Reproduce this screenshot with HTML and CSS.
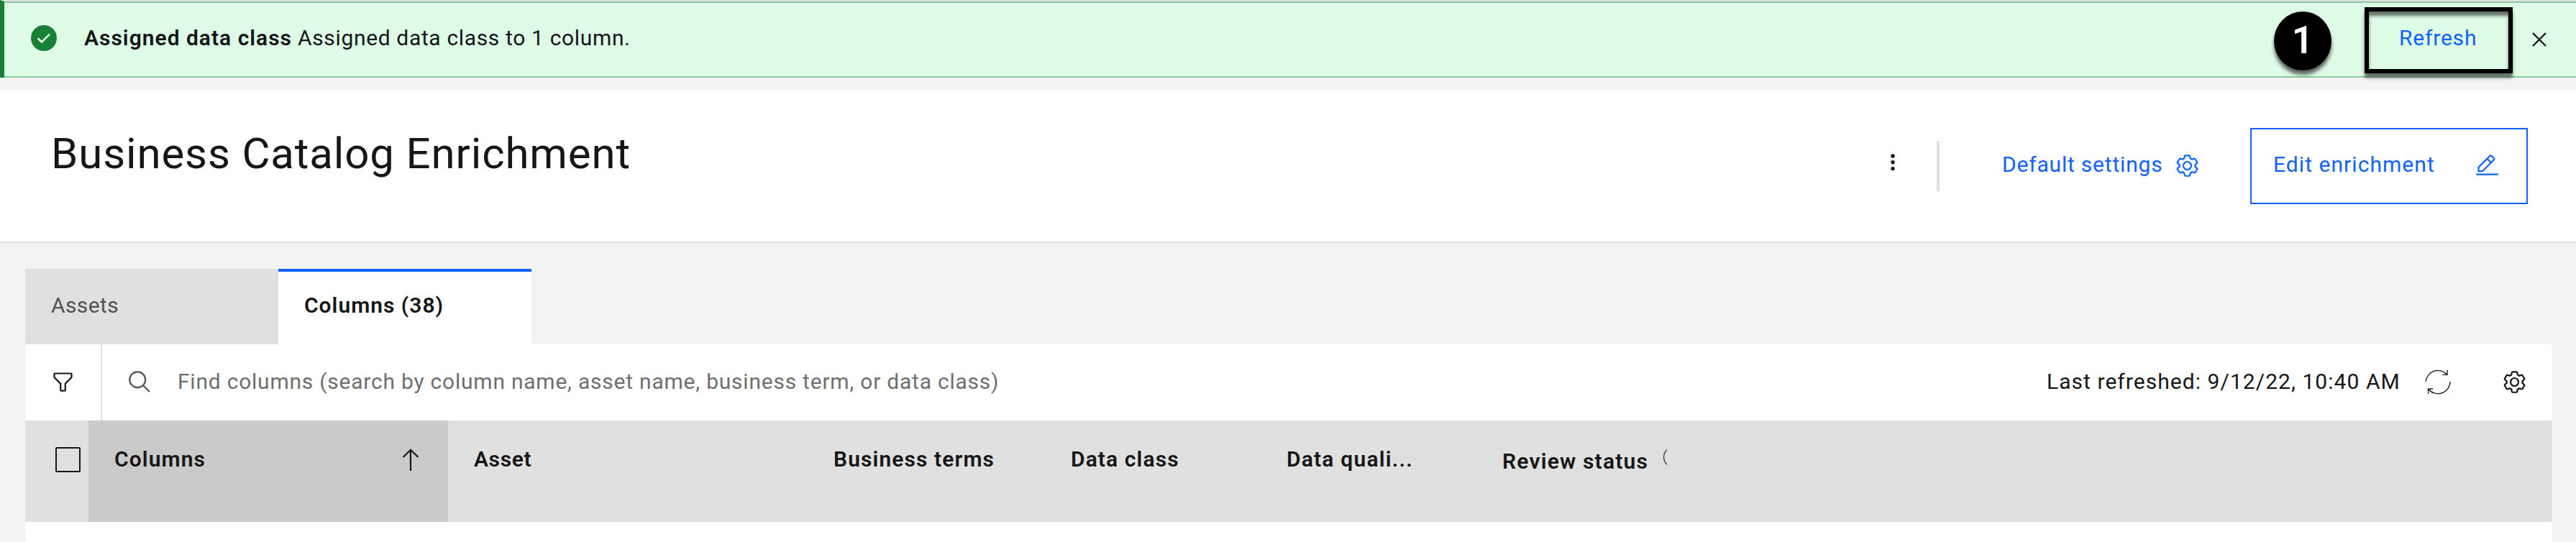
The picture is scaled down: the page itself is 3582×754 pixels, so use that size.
FILE: index.html
```html
<!DOCTYPE html>
<html lang="en">
<head>
<meta charset="utf-8">
<title>Business Catalog Enrichment</title>
<link rel="stylesheet" href="styles.css">
</head>
<body>
<svg class="defs" aria-hidden="true">
  <symbol id="gear" viewBox="0 0 32 32"><path d="M27,16.76c0-.25,0-.5,0-.76s0-.51,0-.77l1.92-1.68A2,2,0,0,0,29.3,11L26.94,7a2,2,0,0,0-1.73-1,2,2,0,0,0-.64.1l-2.43.82a11.35,11.35,0,0,0-1.31-.75l-.51-2.52a2,2,0,0,0-2-1.61H13.64a2,2,0,0,0-2,1.61l-.51,2.52a11.48,11.48,0,0,0-1.32.75L7.43,6.06A2,2,0,0,0,6.79,6,2,2,0,0,0,5.06,7L2.7,11a2,2,0,0,0,.41,2.51L5,15.24c0,.25,0,.5,0,.76s0,.51,0,.77L3.11,18.45A2,2,0,0,0,2.7,21L5.06,25a2,2,0,0,0,1.73,1,2,2,0,0,0,.64-.1l2.43-.82a11.35,11.35,0,0,0,1.31.75l.51,2.52a2,2,0,0,0,2,1.61h4.72a2,2,0,0,0,2-1.61l.51-2.52a11.48,11.48,0,0,0,1.32-.75l2.42.82a2,2,0,0,0,.64.1,2,2,0,0,0,1.73-1L29.3,21a2,2,0,0,0-.41-2.51ZM25.21,24l-3.43-1.16a8.86,8.86,0,0,1-2.71,1.57L18.36,28H13.64l-.71-3.55a9.36,9.36,0,0,1-2.7-1.57L6.79,24,4.43,20l2.72-2.4a8.9,8.9,0,0,1,0-3.13L4.43,12,6.79,8l3.43,1.16a8.86,8.86,0,0,1,2.71-1.57L13.64,4h4.72l.71,3.55a9.36,9.36,0,0,1,2.7,1.57L25.21,8,27.57,12l-2.72,2.4a8.9,8.9,0,0,1,0,3.13L27.57,20Z"/><path d="M16,22a6,6,0,1,1,6-6A5.94,5.94,0,0,1,16,22Zm0-10a3.91,3.91,0,0,0-4,4,3.91,3.91,0,0,0,4,4,3.91,3.91,0,0,0,4-4A3.91,3.91,0,0,0,16,12Z"/></symbol>
</svg>

<div class="banner">
  <svg class="banner-icon" viewBox="0 0 36 36"><circle cx="18" cy="18" r="18" fill="#198038"/><path d="M9.6 18.2l5.4 5.2L26 12.6" fill="none" stroke="#defbe6" stroke-width="2.6"/></svg>
  <p class="banner-text"><strong class="t banner-title">Assigned data class</strong><span class="t banner-sub">Assigned data class to 1 column.</span></p>
  <span class="step">1</span>
  <a class="banner-action"><span class="t">Refresh</span></a>
  <svg class="close" viewBox="0 0 20 20"><path d="M1 1l18 18M19 1L1 19" stroke="#161616" stroke-width="2.3"/></svg>
</div>

<header class="header">
  <h1 class="title">Business Catalog Enrichment</h1>
  <svg class="kebab" viewBox="0 0 8 26"><circle cx="4" cy="4" r="2.7"/><circle cx="4" cy="12.8" r="2.7"/><circle cx="4" cy="21.6" r="2.7"/></svg>
  <div class="divider"></div>
  <a class="link"><span class="t">Default settings</span><svg class="icon"><use href="#gear"/></svg></a>
  <a class="button"><span class="t">Edit enrichment</span><svg class="icon" viewBox="0 0 32 32"><path d="M2 26h28v2H2zM25.4 9c.8-.8.8-2 0-2.8l-3.6-3.6c-.8-.8-2-.8-2.8 0l-15 15V24h6.4L25.4 9zM20.4 4L24 7.6l-3 3L17.4 7l3-3zM6 22v-3.6l10-10 3.6 3.6-10 10H6z"/></svg></a>
</header>

<main class="main">
  <nav class="tabs">
    <a class="tab">Assets</a>
    <a class="tab tab-active">Columns (38)</a>
  </nav>
  <div class="toolbar">
    <div class="filter"><svg class="icon" viewBox="0 0 32 32"><path d="M18,28H14a2,2,0,0,1-2-2V18.41L4.59,11A2,2,0,0,1,4,9.59V6A2,2,0,0,1,6,4H26a2,2,0,0,1,2,2V9.59A2,2,0,0,1,27.41,11L20,18.41V26A2,2,0,0,1,18,28ZM6,6V9.59l8,8V26h4V17.59l8-8V6Z"/></svg></div>
    <svg class="icon search-icon" viewBox="0 0 32 32"><path d="M29,27.5859l-7.5521-7.5521a11.0177,11.0177,0,1,0-1.4141,1.4141L27.5859,29ZM4,13a9,9,0,1,1,9,9A9.01,9.01,0,0,1,4,13Z"/></svg>
    <span class="placeholder">Find columns (search by column name, asset name, business term, or data class)</span>
    <span class="t refreshed">Last refreshed: 9/12/22, 10:40 AM</span>
    <svg class="renew" viewBox="0 0 36 36"><path d="M1 18A17 17 0 0 1 31 8.500M31 1.500V8.300H24.500M35 18A17 17 0 0 1 4.500 28M4.500 35V28H11"/></svg>
    <svg class="icon toolbar-gear"><use href="#gear"/></svg>
  </div>
  <div class="thead">
    <div class="th th-check"><span class="checkbox"></span></div>
    <div class="th th-sorted"><span class="t">Columns</span><svg class="sort" viewBox="0 0 24 32"><path d="M12 31V2M1.500 12L12 1.800L22.500 12"/></svg></div>
    <div class="th th-asset"><span class="t">Asset</span></div>
    <div class="th th-terms"><span class="t">Business terms</span></div>
    <div class="th th-class"><span class="t">Data class</span></div>
    <div class="th th-quality"><span class="t">Data quali...</span></div>
    <div class="th th-review"><span class="t">Review status</span><svg class="clipped" viewBox="0 0 6 24"><path d="M6 1.500C0 8 0 16 6 22.500"/></svg></div>
  </div>
</main>
</body>
</html>
```
FILE: styles.css
```css
* { box-sizing: border-box; }
body { margin: 0; width: 3582px; height: 754px; overflow: hidden; background: #f3f3f3; color: #161616; font-family: Roboto, "Liberation Sans", sans-serif; font-size: 30px; line-height: 40px; }
.defs { position: absolute; width: 0; height: 0; }
.t { white-space: nowrap; }
.icon { width: 35px; height: 35px; flex: none; fill: currentColor; }

.banner { display: flex; align-items: flex-start; height: 108px; border-top: 2px solid #e0e0e0; border-left: 6px solid #198038; background: #defbe6; box-shadow: inset 0 2px #8cc9a0, inset 0 -2px #8cc9a0; padding-left: 37px; }
.banner-icon { width: 36px; height: 36px; margin-top: 33px; flex: none; }
.banner-text { margin: 31px 0 0 38px; flex: 1; }
.banner-title { font-weight: 600; display: inline-block; width: 297px; letter-spacing: 1px; }
.banner-sub { letter-spacing: 0.65px; }
.step { width: 80px; height: 82px; margin: 14px 46px 0 0; border-radius: 50%; background: #000; color: #fff; font-size: 53px; line-height: 81px; font-weight: 600; text-align: center; box-shadow: 0 6px 5px rgba(0,0,0,.6); }
.banner-action { width: 206px; height: 92px; margin-top: 8px; border: 6px solid #000; padding: 17px 0 0 42px; color: #0f62fe; letter-spacing: 0.8px; box-shadow: 0 6px 4px rgba(0,0,0,.55), inset 0 6px 4px rgba(0,0,0,.55); }
.close { width: 20px; height: 20px; margin: 43px 41px 0 27px; }

.header { display: flex; align-items: flex-start; height: 213px; margin-top: 17px; background: #fff; border-bottom: 2px solid #e0e0e0; padding-left: 71px; padding-right: 67px; }
.title { flex: 1; margin: 54px 0 0; font-size: 60px; line-height: 70px; font-weight: 400; letter-spacing: 0.85px; }
.kebab { width: 8px; height: 26px; margin: 88px 57px 0 0; fill: #161616; }
.divider { width: 4px; height: 70px; margin: 71px 87px 0 0; background: #e0e0e0; }
.link { display: flex; justify-content: space-between; width: 275px; margin: 84px 70px 0 0; color: #0f62fe; letter-spacing: 0.8px; }
.link .icon { margin-top: 4px; }
.button { display: flex; justify-content: space-between; width: 386px; height: 106px; margin-top: 53px; border: 2px solid #0f62fe; padding: 29px 37px 0 30px; color: #0f62fe; letter-spacing: 1.05px; }
.button .icon { margin-top: 4px; }

.main { margin: 36px 33px 0 35px; height: 380px; background: #fff; }
.tabs { display: flex; height: 105px; background: #f3f3f3; }
.tab { width: 352px; padding: 31px 36px 0; background: #e0e0e0; color: #525252; letter-spacing: 0.4px; }
.tab-active { background: #fff; border-top: 4px solid #0f62fe; padding-top: 27px; color: #161616; font-weight: 600; letter-spacing: 1px; }
.toolbar { display: flex; align-items: flex-start; height: 106px; }
.filter { width: 107px; height: 106px; border-right: 2px solid #e0e0e0; padding: 35px 0 0 35px; }
.search-icon { margin: 35px 0 0 35px; color: #525252; }
.placeholder { flex: 1; margin: 32px 0 0 35px; color: #6f6f6f; letter-spacing: 0.77px; }
.refreshed { margin-top: 32px; width: 492px; letter-spacing: 1.05px; }
.renew { width: 36px; height: 36px; margin: 34px 71px 0 34px; fill: none; stroke: #161616; stroke-width: 1.3; }
.toolbar-gear { margin: 35px 35px 0 0; }
.thead { display: flex; height: 141px; background: #e0e0e0; font-weight: 600; letter-spacing: 1.1px; }
.th { display: flex; justify-content: space-between; align-items: flex-start; padding: 34px 34px 0 36px; }
.th-check { width: 88px; padding: 37px 0 0 42px; }
.checkbox { width: 35px; height: 35px; border: 2px solid #161616; border-radius: 2px; }
.th-sorted { width: 500px; background: #cacaca; padding-right: 40px; }
.sort { width: 24px; height: 32px; margin-top: 5px; fill: none; stroke: #161616; stroke-width: 2.2; }
.th-asset { width: 500px; letter-spacing: 0.6px; }
.th-terms { width: 330px; }
.th-class { width: 300px; }
.th-quality { width: 300px; letter-spacing: 1.2px; }
.th-review { width: 265px; padding: 37px 0 0 36px; letter-spacing: 1.2px; }
.clipped { width: 6px; height: 24px; margin-top: 2px; fill: none; stroke: #525252; stroke-width: 1.6; }
```
